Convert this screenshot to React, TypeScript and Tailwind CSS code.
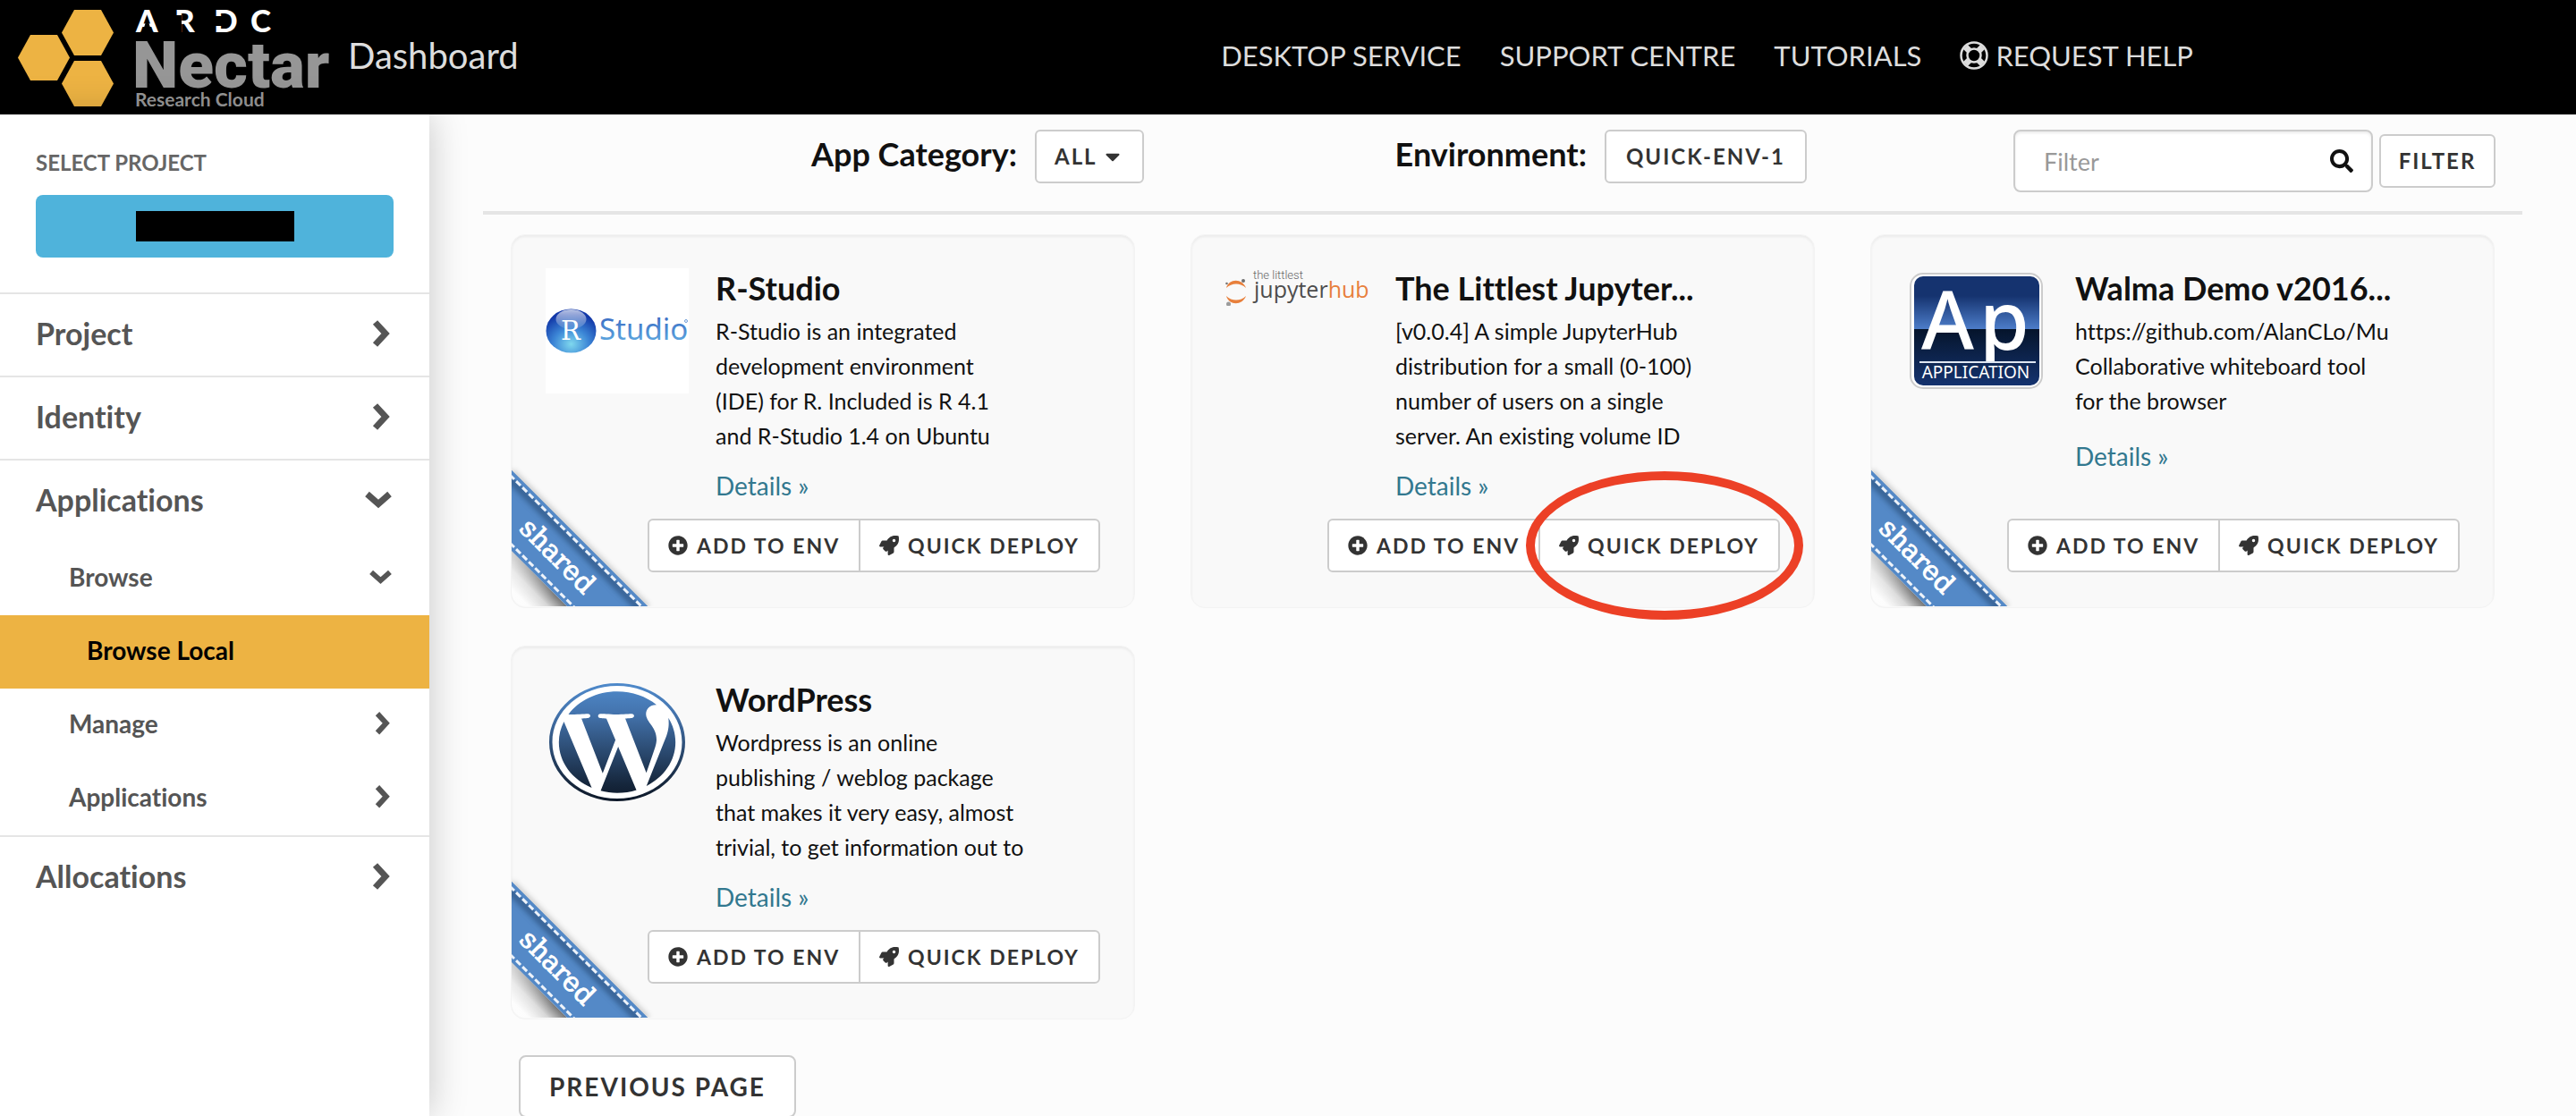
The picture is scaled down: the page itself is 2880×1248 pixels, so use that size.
import React from 'react'
import { FaCaretDown, FaPlusCircle, FaRocket, FaSearch, FaWordpress } from 'react-icons/fa'

function Brand() {
  return (
    <a href="#home" aria-label="ARDC Nectar Research Cloud" className="flex shrink-0">
      <svg viewBox="0 0 372 128" className="h-32 w-[372px]">
        <g fill="#edb343">
          <path d="M34 39H64L78 64.500L64 90H34L20 64.500Z" />
          <path d="M83 11H113L127 36.500L113 62H83L69 36.500Z" />
          <path d="M83 68H113L127 93.500L113 119H83L69 93.500Z" />
        </g>
        <g fill="#ffffff" fontFamily="Lato" fontWeight="900" fontSize="35">
          <text x="152" y="36">A</text>
          <text x="195" y="36">R</text>
          <text x="239" y="36">D</text>
          <text x="280" y="36">C</text>
        </g>
        <g fill="#000000">
          <path d="M164.500 20L170 37H159Z" />
          <path d="M195 17H203V37H195Z" />
          <path d="M239 18H248V29H239Z" />
        </g>
        <g fill="#969696">
          <text x="148" y="98" fontFamily="Roboto" fontSize="73" fontWeight="900">Nectar</text>
          <text x="151" y="119" fontFamily="Lato" fontSize="21" fontWeight="700">Research Cloud</text>
        </g>
      </svg>
    </a>
  )
}

function LifeRing() {
  return (
    <svg viewBox="0 0 32 32" className="size-8" fill="none" stroke="currentColor">
      <circle cx="16" cy="16" r="14.500" strokeWidth="2.500" />
      <circle cx="16" cy="16" r="7.500" strokeWidth="2.500" />
      <path d="M6.500 6.500L11 11M25.500 6.500L21 11M6.500 25.500L11 21M25.500 25.500L21 21" strokeWidth="7" />
    </svg>
  )
}

function Header() {
  return (
    <header className="flex h-32 items-center bg-black text-[#dddddd]">
      <Brand />
      <span className="ml-[17px] pb-1 text-[40px] leading-[64px]">Dashboard</span>
      <nav className="mr-[428px] ml-auto flex items-center gap-[43px] pb-1 text-[31px] leading-[48px]">
        <a href="#desktop">DESKTOP SERVICE</a>
        <a href="#support">SUPPORT CENTRE</a>
        <a href="#tutorials">TUTORIALS</a>
        <a href="#help" className="flex items-center gap-2">
          <LifeRing />
          REQUEST HELP
        </a>
      </nav>
    </header>
  )
}

function Chevron({ open, small = false }: { open: boolean; small?: boolean }) {
  return open ? (
    <svg viewBox="0 0 30 20" className={small ? 'mr-0.5 w-[25px]' : 'mr-0.5 w-[30px]'} fill="none" stroke="currentColor" strokeWidth="7">
      <path d="M2.500 3.500L15 14.500L27.500 3.500" />
    </svg>
  ) : (
    <svg viewBox="0 0 20 30" className={small ? 'mr-1 w-[17px]' : 'mr-1 w-5'} fill="none" stroke="currentColor" strokeWidth="7">
      <path d="M3.500 2.500L15 15L3.500 27.500" />
    </svg>
  )
}

function Panel({ label, open = false, children }: { label: string; open?: boolean; children?: React.ReactNode }) {
  return (
    <div className="border-t-2 border-[#e5e5e5]">
      <button type="button" aria-expanded={open} className="flex h-[91px] w-full items-center justify-between px-10 pb-1 text-left text-[34px] font-bold">
        {label}
        <Chevron open={open} />
      </button>
      {children}
    </div>
  )
}

function SubPanel({ label, open = false }: { label: string; open?: boolean }) {
  return (
    <button type="button" aria-expanded={open} className="flex h-[82px] w-full items-center justify-between pr-10 pb-1 pl-[77px] text-left text-[28px] font-bold">
      {label}
      <Chevron open={open} small />
    </button>
  )
}

function Sidebar() {
  return (
    <aside className="z-10 w-[480px] shrink-0 bg-white text-[#555555] shadow-[0_0_40px_rgba(0,0,0,0.22)]">
      <div className="px-10 pt-9 pb-[39px]">
        <h2 className="text-[24px] leading-9 font-bold text-[#666666]">SELECT PROJECT</h2>
        <button type="button" aria-label="Select project" className="mt-[18px] flex h-[70px] w-full items-center justify-center rounded-lg bg-[#4fb3db]">
          <span className="h-[34px] w-[177px] bg-black" />
        </button>
      </div>
      <Panel label="Project" />
      <Panel label="Identity" />
      <Panel label="Applications" open>
        <SubPanel label="Browse" open />
        <a href="#local" className="flex h-[82px] items-center bg-[#edb343] pb-1 pl-[97px] text-[28px] font-bold text-black">
          Browse Local
        </a>
        <SubPanel label="Manage" />
        <SubPanel label="Applications" />
      </Panel>
      <Panel label="Allocations" />
    </aside>
  )
}

function RStudioLogo() {
  return (
    <svg viewBox="0 0 160 140" className="h-[140px] w-40 bg-white" role="img" aria-label="R Studio">
      <defs>
        <radialGradient id="ball" cx="0.5" cy="0.8" r="0.7">
          <stop offset="0" stopColor="#7fd8ee" />
          <stop offset="0.5" stopColor="#3c86d6" />
          <stop offset="1" stopColor="#1238a8" />
        </radialGradient>
        <linearGradient id="gloss" x1="0" y1="0" x2="0" y2="1">
          <stop offset="0" stopColor="#ffffff" stopOpacity="0.7" />
          <stop offset="1" stopColor="#ffffff" stopOpacity="0.1" />
        </linearGradient>
        <linearGradient id="word" x1="0" y1="0" x2="0" y2="1">
          <stop offset="0.2" stopColor="#3a6cc4" />
          <stop offset="0.9" stopColor="#62aee2" />
        </linearGradient>
      </defs>
      <ellipse cx="28.500" cy="70" rx="28" ry="24.500" fill="url(#ball)" />
      <ellipse cx="28.500" cy="57" rx="17" ry="11" fill="url(#gloss)" />
      <text x="28" y="80" textAnchor="middle" fill="#fff" fontFamily="DejaVu Serif" fontSize="29">R</text>
      <text x="60" y="80" fill="url(#word)" fontFamily="Noto Sans" fontSize="33">Studio</text>
      <circle cx="157" cy="59" r="1.500" fill="none" stroke="#6d9bd8" />
    </svg>
  )
}

function JupyterHubLogo() {
  return (
    <svg viewBox="0 0 160 42" className="h-[42px] w-40" role="img" aria-label="the littlest jupyterhub">
      <path d="M1 22C4 11 19 11 23 22C17 16 7 16 1 22Z" fill="#e8803c" />
      <path d="M1 31C4 42 19 42 23 31C17 37 7 37 1 31Z" fill="#e8803c" />
      <circle cx="20" cy="14" r="2" fill="#6e6e6e" />
      <circle cx="1.500" cy="17" r="1.300" fill="#757575" />
      <circle cx="3.500" cy="40" r="2.500" fill="#9b9b9b" />
      <text x="31" y="12" fill="#666" fontFamily="Roboto" fontWeight="300" fontSize="13">the littlest</text>
      <text x="32" y="33" fontFamily="Open Sans" fontSize="25" fill="#4d4d4d">
        jupyter<tspan fill="#e8803c">hub</tspan>
      </text>
    </svg>
  )
}

function ApplicationLogo() {
  return (
    <svg viewBox="0 0 160 140" className="h-[140px] w-40" role="img" aria-label="Application">
      <defs>
        <linearGradient id="sky" x1="0" y1="0" x2="0" y2="1">
          <stop offset="0" stopColor="#15336f" />
          <stop offset="0.18" stopColor="#15336f" />
          <stop offset="0.48" stopColor="#4c7cc8" />
          <stop offset="0.48" stopColor="#05142b" />
          <stop offset="1" stopColor="#15336f" />
        </linearGradient>
        <clipPath id="above-rule">
          <rect width="160" height="105" />
        </clipPath>
      </defs>
      <rect x="6" y="6" width="147" height="128" rx="14" fill="#fff" stroke="#ccc" strokeWidth="2" />
      <rect x="10" y="9" width="140" height="122" rx="10" fill="url(#sky)" />
      <g clipPath="url(#above-rule)" fill="#fff" fontFamily="Noto Sans" fontWeight="500">
        <text x="18" y="91" fontSize="90">A</text>
        <text x="83" y="91" fontSize="90">p</text>
      </g>
      <path d="M16 105H146" stroke="#dfe6f2" strokeWidth="2" />
      <text x="79" y="123" textAnchor="middle" fill="#fff" fontFamily="Noto Sans" fontSize="19">APPLICATION</text>
    </svg>
  )
}

function WordPressLogo() {
  return (
    <svg viewBox="0 0 160 140" className="h-[140px] w-40" role="img" aria-label="WordPress">
      <defs>
        <linearGradient id="wp" x1="0" y1="0" x2="0" y2="1">
          <stop offset="0" stopColor="#4f8acb" />
          <stop offset="0.25" stopColor="#4474ae" />
          <stop offset="0.85" stopColor="#16273d" />
          <stop offset="1" stopColor="#0d1828" />
        </linearGradient>
      </defs>
      <ellipse cx="80" cy="70" rx="74" ry="64" fill="#fff" />
      <svg x="4" y="4" width="152" height="132" viewBox="8 8 496 496" preserveAspectRatio="none">
        <FaWordpress size={512} style={{ fill: 'url(#wp)' }} />
      </svg>
    </svg>
  )
}

function Ribbon() {
  return (
    <svg viewBox="0 0 160 159" className="absolute bottom-px left-0 h-[159px] w-40 rounded-bl-2xl" role="img" aria-label="shared">
      <defs>
        <clipPath id="band">
          <path d="M0 7L160 167H70L0 97Z" />
        </clipPath>
        <linearGradient id="fold" gradientUnits="userSpaceOnUse" x1="32" y1="128" x2="10" y2="150">
          <stop offset="0" stopColor="#000" stopOpacity="0.55" />
          <stop offset="0.5" stopColor="#000" stopOpacity="0.15" />
          <stop offset="1" stopColor="#000" stopOpacity="0" />
        </linearGradient>
        <linearGradient id="fade" gradientUnits="userSpaceOnUse" x1="0" y1="95" x2="50" y2="145">
          <stop offset="0" stopColor="#fff" stopOpacity="0.7" />
          <stop offset="1" stopColor="#fff" stopOpacity="0" />
        </linearGradient>
      </defs>
      <path d="M0 97L62 159H0Z" fill="#fcfcfc" />
      <path d="M0 97L62 159H0Z" fill="url(#fold)" />
      <path d="M0 97L62 159H0Z" fill="url(#fade)" />
      <path d="M0 8L152 160" stroke="#000" strokeOpacity="0.25" strokeWidth="5" className="blur-[3px]" />
      <path d="M0 7L160 167H70L0 97Z" fill="#5489c7" />
      <g clipPath="url(#band)">
        <path d="M-6 13L160 179" stroke="#1d3c63" strokeOpacity="0.6" strokeWidth="7" className="blur-[3px]" />
        <path d="M0 7L160 167" stroke="#5489c7" strokeWidth="9" />
        <g stroke="#eef3fa" strokeWidth="3" strokeDasharray="7 3">
          <path d="M-2 12L160 174" />
          <path d="M-2 88L80 170" />
        </g>
      </g>
      <text x="0" y="0" fill="#fff" stroke="#fff" strokeWidth="1" fontFamily="DejaVu Serif" fontSize="30" textAnchor="middle" transform="translate(44 110) rotate(45)">
        shared
      </text>
    </svg>
  )
}

interface App {
  name: string
  lines: string[]
  logo: React.ReactNode
  shared: boolean
  highlighted?: boolean
}

const apps: App[] = [
  {
    name: 'R-Studio',
    lines: ['R-Studio is an integrated', 'development environment', '(IDE) for R. Included is R 4.1', 'and R-Studio 1.4 on Ubuntu'],
    logo: <RStudioLogo />,
    shared: true,
  },
  {
    name: 'The Littlest Jupyter...',
    lines: ['[v0.0.4] A simple JupyterHub', 'distribution for a small (0-100)', 'number of users on a single', 'server. An existing volume ID'],
    logo: <JupyterHubLogo />,
    shared: false,
    highlighted: true,
  },
  {
    name: 'Walma Demo v2016...',
    lines: ['https://github.com/AlanCLo/Mu', 'Collaborative whiteboard tool', 'for the browser'],
    logo: <ApplicationLogo />,
    shared: true,
  },
  {
    name: 'WordPress',
    lines: ['Wordpress is an online', 'publishing / weblog package', 'that makes it very easy, almost', 'trivial, to get information out to'],
    logo: <WordPressLogo />,
    shared: true,
  },
]

function AppCard({ app }: { app: App }) {
  return (
    <article className="relative flex h-[418px] flex-col rounded-2xl border border-[#f3f3f3] bg-[#f9f9f9] px-[38px] pt-[37px] pb-[39px] shadow-[inset_0_2px_3px_rgba(0,0,0,0.06)]">
      {app.shared && <Ribbon />}
      <div className="flex gap-[30px]">
        <div className="w-40 shrink-0">{app.logo}</div>
        <div className="min-w-0">
          <h3 className="text-[36px] leading-[44px] font-bold whitespace-nowrap">{app.name}</h3>
          <p className="mt-[7px] max-h-[150px] overflow-hidden text-[25px] leading-[39px] whitespace-nowrap">
            {app.lines.map((line) => (
              <span key={line} className="block">
                {line}
              </span>
            ))}
          </p>
          <a href="#details" className="mt-[23px] block text-[28px] leading-[38px] text-[#32788f]">
            Details »
          </a>
        </div>
      </div>
      <div className="relative mt-auto flex self-end text-[23px] font-bold tracking-[2px] text-[#333333]">
        <button type="button" className="flex h-[60px] items-center gap-2.5 rounded-l-md border-2 border-[#cccccc] bg-white px-[21px]">
          <FaPlusCircle className="size-[22px]" />
          ADD TO ENV
        </button>
        <button type="button" className="-ml-0.5 flex h-[60px] items-center gap-2.5 rounded-r-md border-2 border-[#cccccc] bg-white px-[21px]">
          <FaRocket className="size-[22px]" />
          QUICK DEPLOY
        </button>
        {app.highlighted && (
          <span className="pointer-events-none absolute -top-[53px] -right-[26px] h-[166px] w-[310px] rounded-[50%] border-[10px] border-[#ec4026]" />
        )}
      </div>
    </article>
  )
}

const buttonClass =
  'flex h-[60px] items-center justify-center rounded-md border-2 border-[#cccccc] bg-white text-[24px] font-bold tracking-[2px] text-[#333333]'

function Toolbar() {
  return (
    <div className="flex h-[112px] items-start border-b-4 border-[#e5e5e5] pt-[17px] pr-[30px]">
      <div className="flex flex-1 justify-between pr-[231px] pl-[367px]">
        <div className="flex gap-5">
          <h2 className="text-[36px] leading-[54px] font-bold">App Category:</h2>
          <button type="button" className={buttonClass + ' gap-1 px-5'}>
            ALL
            <FaCaretDown className="size-[26px]" />
          </button>
        </div>
        <div className="flex gap-5">
          <h2 className="text-[36px] leading-[54px] font-bold">Environment:</h2>
          <button type="button" className={buttonClass + ' px-[22px]'}>
            QUICK-ENV-1
          </button>
        </div>
      </div>
      <form className="flex items-center gap-[7px]">
        <div className="relative">
          <input
            aria-label="Filter"
            placeholder="Filter"
            className="h-[70px] w-[402px] rounded-lg border-2 border-[#cccccc] bg-white pr-16 pl-8 text-[27px] shadow-[inset_0_2px_3px_rgba(0,0,0,0.08)] placeholder:text-[#999999]"
          />
          <FaSearch className="absolute top-[22px] right-[22px] size-[26px]" />
        </div>
        <button type="button" className={buttonClass + ' w-[130px]'}>
          FILTER
        </button>
      </form>
    </div>
  )
}

export default function App() {
  return (
    <div className="flex h-screen flex-col overflow-hidden bg-[#fcfcfc] font-['Lato',sans-serif] text-[#111111] [font-variant-ligatures:none]">
      <Header />
      <div className="flex min-h-0 flex-1">
        <Sidebar />
        <main className="min-w-0 flex-1 px-[60px]">
          <Toolbar />
          <section aria-label="Applications" className="grid grid-cols-3 gap-x-[62px] gap-y-[42px] px-[31px] pt-[22px]">
            {apps.map((app) => (
              <AppCard key={app.name} app={app} />
            ))}
          </section>
          <button
            type="button"
            className="mt-10 ml-10 flex h-[70px] items-center rounded-lg border-2 border-[#cccccc] bg-white px-8 text-[28px] font-bold tracking-[2px] text-[#333333]"
          >
            PREVIOUS PAGE
          </button>
        </main>
      </div>
    </div>
  )
}
